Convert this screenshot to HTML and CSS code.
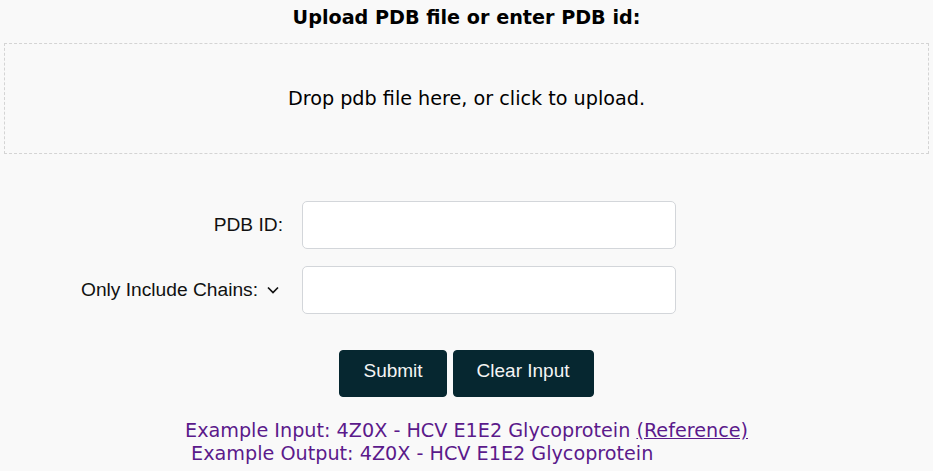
FILE: index.html
```html
<!DOCTYPE html>
<html lang="en">
<head>
<meta charset="utf-8">
<title>PDB Upload</title>
<link rel="stylesheet" href="styles.css">
</head>
<body>
<main class="page">
  <h2 class="title">Upload PDB file or enter PDB id:</h2>
  <div class="dropzone">Drop pdb file here, or click to upload.</div>
  <form class="form">
    <label class="label" for="pdbid">PDB ID:</label>
    <input class="field" id="pdbid" type="text">
    <label class="label" for="chains">Only Include Chains:
      <svg class="chev" width="14" height="10" viewBox="0 0 14 10"><polyline points="2,2.5 7,7.5 12,2.5" fill="none" stroke="#111" stroke-width="1.7"/></svg>
    </label>
    <input class="field" id="chains" type="text">
  </form>
  <div class="actions">
    <button class="btn" type="button">Submit</button>
    <button class="btn" type="button">Clear Input</button>
  </div>
  <div class="examples">
    <div class="examples-inner">Example Input: 4Z0X - HCV E1E2 Glycoprotein <a href="#">(Reference)</a><br>&nbsp;Example Output: 4Z0X - HCV E1E2 Glycoprotein</div>
  </div>
</main>
</body>
</html>
```
FILE: styles.css
```css
html, body {
  margin: 0;
  padding: 0;
  background: #f9f9f9;
}
body {
  font-family: "DejaVu Sans", sans-serif;
  color: #000;
}
.page {
  display: flex;
  flex-direction: column;
}
.title {
  margin: 7px 0 0;
  font-size: 19.2px;
  line-height: 22px;
  font-weight: bold;
  text-align: center;
}
.dropzone {
  margin: 14px 4px 0;
  height: 111px;
  box-sizing: border-box;
  border: 1px dashed #d4d4d4;
  display: flex;
  align-items: center;
  justify-content: center;
  font-size: 19.2px;
}
.form {
  margin-top: 47px;
  display: grid;
  grid-template-columns: 283px 374px;
  column-gap: 19px;
  row-gap: 17px;
  font-family: "Liberation Sans", Arial, sans-serif;
}
.label {
  display: flex;
  align-items: center;
  justify-content: flex-end;
  font-size: 19.2px;
  color: #111;
}
.chev {
  margin-left: 8px;
  margin-right: 3px;
}
.field {
  height: 48px;
  box-sizing: border-box;
  border: 1px solid #d3d6da;
  border-radius: 5px;
  background: #fff;
  margin: 0;
}
.actions {
  margin-top: 36px;
  display: flex;
  justify-content: center;
  gap: 6px;
}
.btn {
  height: 47px;
  box-sizing: border-box;
  padding: 0 23px 6px;
  border: 1px solid #062730;
  border-radius: 4px;
  background: #062730;
  color: #f4f4f4;
  font-family: "Liberation Sans", Arial, sans-serif;
  font-size: 19px;
}
.examples {
  margin-top: 22px;
  display: flex;
  justify-content: center;
}
.examples-inner {
  font-size: 19.2px;
  line-height: 23px;
  color: #5b1a8b;
  text-align: left;
}
.examples-inner a {
  color: #5b1a8b;
}
```
